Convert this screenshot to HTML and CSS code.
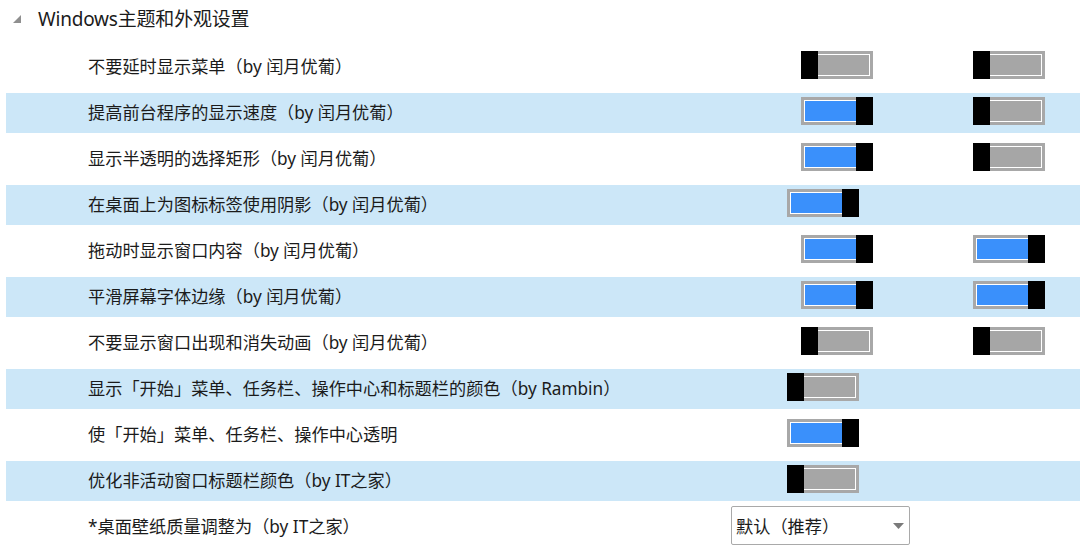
FILE: index.html
```html
<!DOCTYPE html>
<html lang="zh-CN">
<head>
<meta charset="utf-8">
<title>Windows主题和外观设置</title>
<link rel="stylesheet" href="styles.css">
</head>
<body>
<div class="panel">
  <div class="group-header">
    <svg class="expander" width="8" height="8" viewBox="0 0 8 8"><polygon points="8,0 8,8 0,8" fill="#8f8f8f"/></svg>
    <span class="group-title">Windows主题和外观设置</span>
  </div>
  <div class="rows">
    <div class="row pair">
      <span class="label">不要延时显示菜单（by 闰月优葡）</span>
      <span class="toggle off"><span class="fill"></span><span class="knob"></span></span>
      <span class="toggle off"><span class="fill"></span><span class="knob"></span></span>
    </div>
    <div class="row pair alt">
      <span class="label">提高前台程序的显示速度（by 闰月优葡）</span>
      <span class="toggle on"><span class="fill"></span><span class="knob"></span></span>
      <span class="toggle off"><span class="fill"></span><span class="knob"></span></span>
    </div>
    <div class="row pair">
      <span class="label">显示半透明的选择矩形（by 闰月优葡）</span>
      <span class="toggle on"><span class="fill"></span><span class="knob"></span></span>
      <span class="toggle off"><span class="fill"></span><span class="knob"></span></span>
    </div>
    <div class="row single alt">
      <span class="label">在桌面上为图标标签使用阴影（by 闰月优葡）</span>
      <span class="toggle on"><span class="fill"></span><span class="knob"></span></span>
    </div>
    <div class="row pair">
      <span class="label">拖动时显示窗口内容（by 闰月优葡）</span>
      <span class="toggle on"><span class="fill"></span><span class="knob"></span></span>
      <span class="toggle on"><span class="fill"></span><span class="knob"></span></span>
    </div>
    <div class="row pair alt">
      <span class="label">平滑屏幕字体边缘（by 闰月优葡）</span>
      <span class="toggle on"><span class="fill"></span><span class="knob"></span></span>
      <span class="toggle on"><span class="fill"></span><span class="knob"></span></span>
    </div>
    <div class="row pair">
      <span class="label">不要显示窗口出现和消失动画（by 闰月优葡）</span>
      <span class="toggle off"><span class="fill"></span><span class="knob"></span></span>
      <span class="toggle off"><span class="fill"></span><span class="knob"></span></span>
    </div>
    <div class="row single alt">
      <span class="label">显示「开始」菜单、任务栏、操作中心和标题栏的颜色（by Rambin）</span>
      <span class="toggle off"><span class="fill"></span><span class="knob"></span></span>
    </div>
    <div class="row single">
      <span class="label">使「开始」菜单、任务栏、操作中心透明</span>
      <span class="toggle on"><span class="fill"></span><span class="knob"></span></span>
    </div>
    <div class="row single alt">
      <span class="label">优化非活动窗口标题栏颜色（by IT之家）</span>
      <span class="toggle off"><span class="fill"></span><span class="knob"></span></span>
    </div>
    <div class="row choice">
      <span class="label">*桌面壁纸质量调整为（by IT之家）</span>
      <span class="select">
        <span class="select-value">默认（推荐）</span>
        <svg class="select-arrow" width="11" height="6" viewBox="0 0 11 6"><polygon points="0,0 11,0 5.5,6" fill="#7a7a7a"/></svg>
      </span>
    </div>
  </div>
</div>
</body>
</html>
```

FILE: styles.css
```css
html, body {
  margin: 0;
  padding: 0;
  background: #ffffff;
}

body {
  width: 1080px;
  height: 556px;
  overflow: hidden;
  font-family: "Noto Sans", "Noto Sans CJK SC", sans-serif;
  color: #1b1b1b;
}

.group-header {
  height: 36px;
  display: flex;
  align-items: center;
  padding-left: 13px;
}

.expander {
  display: block;
  margin-top: 1px;
}

.group-title {
  margin-left: 17px;
  font-size: 19px;
  letter-spacing: -0.2px;
}

.rows {
  display: flex;
  flex-direction: column;
  gap: 6px;
  padding-top: 11px;
  margin-left: 6px;
}

.row {
  height: 40px;
  display: grid;
  align-items: center;
  box-sizing: border-box;
}

.row.alt {
  background: #cce7f8;
}

.row.pair {
  grid-template-columns: 795px 172px 1fr;
}

.row.single {
  grid-template-columns: 781px 1fr;
}

.row.choice {
  grid-template-columns: 725px 1fr;
}

.label {
  padding-left: 82px;
  font-size: 17.2px;
  white-space: nowrap;
  line-height: 40px;
}

.toggle {
  position: relative;
  align-self: start;
  margin-top: 4px;
  width: 72px;
  height: 28px;
  box-sizing: border-box;
  border: 3px solid #a8a8a8;
  padding: 1px;
  background: #ffffff;
  display: flex;
}

.toggle .fill {
  flex: 1;
  background: #a6a6a6;
}

.toggle.on .fill {
  background: #3a90fb;
}

.toggle .knob {
  position: absolute;
  top: -3px;
  width: 17px;
  height: 28px;
  background: #000000;
}

.toggle.off .knob {
  left: -3px;
}

.toggle.on .knob {
  right: -3px;
}

.select {
  align-self: start;
  margin-top: -1px;
  width: 179px;
  height: 39px;
  box-sizing: border-box;
  border: 1px solid #a9a9a9;
  border-radius: 2px;
  background: #ffffff;
  display: flex;
  align-items: center;
  justify-content: space-between;
  padding: 0 5px 0 4px;
}

.select-value {
  font-size: 17.2px;
}

.select-arrow {
  display: block;
}
```
